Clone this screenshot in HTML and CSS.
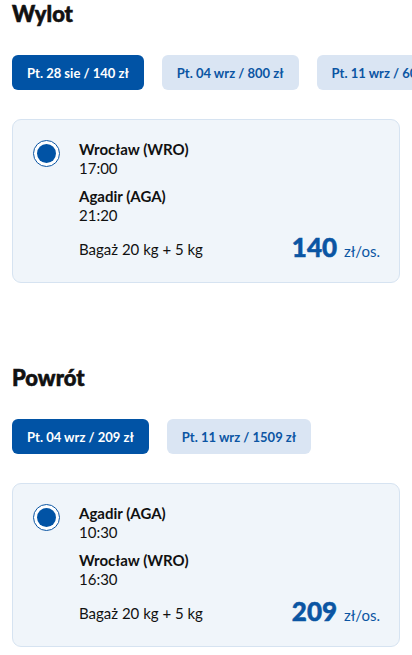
FILE: index.html
```html
<!DOCTYPE html>
<html lang="pl">
<head>
    <meta charset="UTF-8">
    <meta name="viewport" content="width=device-width, initial-scale=1.0">
    <title>Wybór lotu</title>
    <link rel="stylesheet" href="styles.css">
</head>
<body>
    <div class="page">
        <section class="leg">
            <h2 class="leg-title">Wylot</h2>
            <div class="dates">
                <button class="date active">Pt. 28 sie / 140 zł</button>
                <button class="date">Pt. 04 wrz / 800 zł</button>
                <button class="date">Pt. 11 wrz / 600 zł</button>
            </div>
            <div class="flight">
                <span class="radio checked"></span>
                <div class="flight-info">
                    <div class="stop">
                        <div class="airport">Wrocław (WRO)</div>
                        <div class="time">17:00</div>
                    </div>
                    <div class="stop">
                        <div class="airport">Agadir (AGA)</div>
                        <div class="time">21:20</div>
                    </div>
                    <div class="flight-foot">
                        <span class="luggage">Bagaż 20 kg + 5 kg</span>
                        <span class="price"><strong>140</strong> zł/os.</span>
                    </div>
                </div>
            </div>
        </section>

        <section class="leg">
            <h2 class="leg-title">Powrót</h2>
            <div class="dates">
                <button class="date active">Pt. 04 wrz / 209 zł</button>
                <button class="date">Pt. 11 wrz / 1509 zł</button>
            </div>
            <div class="flight">
                <span class="radio checked"></span>
                <div class="flight-info">
                    <div class="stop">
                        <div class="airport">Agadir (AGA)</div>
                        <div class="time">10:30</div>
                    </div>
                    <div class="stop">
                        <div class="airport">Wrocław (WRO)</div>
                        <div class="time">16:30</div>
                    </div>
                    <div class="flight-foot">
                        <span class="luggage">Bagaż 20 kg + 5 kg</span>
                        <span class="price"><strong>209</strong> zł/os.</span>
                    </div>
                </div>
            </div>
        </section>
    </div>
</body>
</html>
```

FILE: styles.css
```css
body {
    margin: 0;
    font-family: Lato, "Open Sans", sans-serif;
    color: #111;
    background: #fff;
}

.page {
    padding: 1px 0 0 12px;
    display: flex;
    flex-direction: column;
    gap: 82px;
    overflow: hidden;
}

.leg-title {
    margin: 0;
    font-size: 22px;
    font-weight: 900;
    line-height: 26px;
    -webkit-text-stroke: 0.6px currentColor;
}

.dates {
    display: flex;
    gap: 18px;
    margin: 28px 0 29px;
    overflow: hidden;
    white-space: nowrap;
}

.date {
    flex: none;
    height: 35px;
    padding: 0 15px;
    border: none;
    border-radius: 6px;
    background-color: #dae5f3;
    color: #0b55a3;
    font-family: inherit;
    font-size: 13px;
    font-weight: 700;
    cursor: pointer;
}

.date.active {
    background-color: #0153a5;
    color: #fff;
}

.flight {
    display: flex;
    gap: 19px;
    width: 388px;
    box-sizing: border-box;
    padding: 20px 19px 15px 20px;
    border: 1px solid #d6e3f1;
    border-radius: 9px;
    background-color: #f0f5fa;
}

.radio {
    flex: none;
    width: 27px;
    height: 27px;
    box-sizing: border-box;
    border: 1px solid #0b55a3;
    border-radius: 50%;
    background: #fff;
    display: flex;
    align-items: center;
    justify-content: center;
}

.radio.checked::after {
    content: "";
    width: 19px;
    height: 19px;
    border-radius: 50%;
    background: #0153a5;
}

.flight-info {
    flex: 1;
    display: flex;
    flex-direction: column;
    gap: 9px;
    font-size: 15px;
    line-height: 19px;
}

.airport {
    font-weight: 700;
}

.flight-foot {
    display: flex;
    align-items: center;
    justify-content: space-between;
    margin-top: -2px;
}

.price {
    color: #0b55a3;
    line-height: 31px;
}

.price strong {
    font-size: 26px;
    font-weight: 900;
    margin-right: 3px;
    -webkit-text-stroke: 0.5px currentColor;
}
```
